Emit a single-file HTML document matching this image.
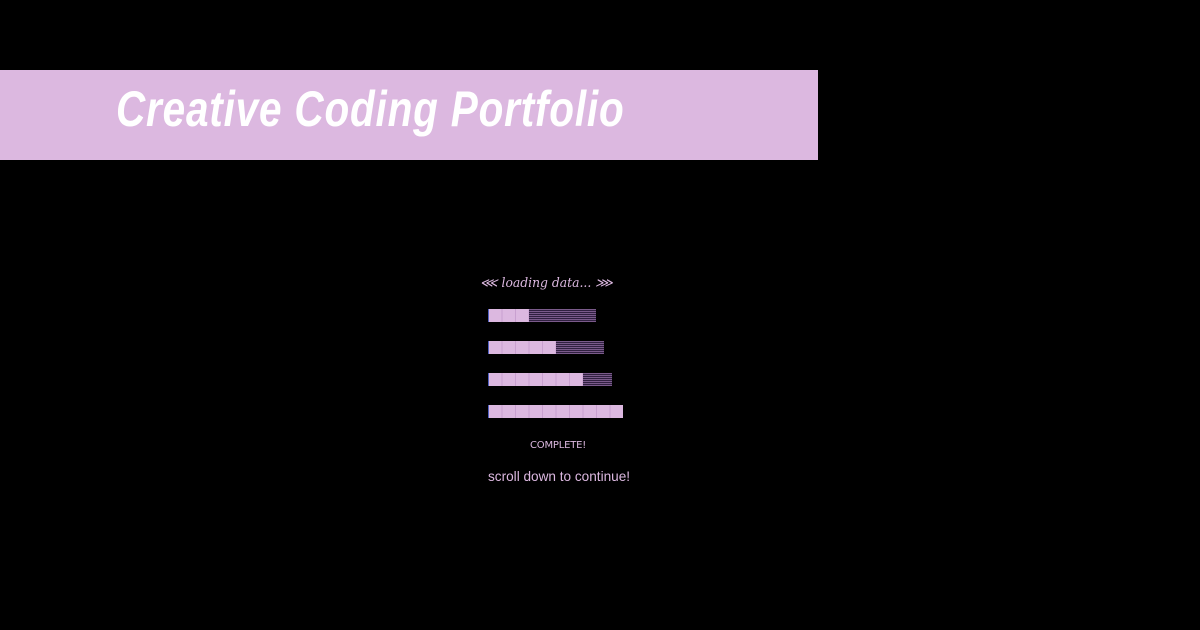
<!DOCTYPE html>
<html><head><style>
body{margin:0;width:1200px;height:630px;background:#000;overflow:hidden;position:relative;font-family:"Liberation Sans",sans-serif}
.banner{position:absolute;left:0;top:70px;width:818px;height:90px;background:#dcb8e0}
.title{position:absolute;left:116px;top:80px;color:#fff;font:italic bold 50px "Liberation Sans",sans-serif;letter-spacing:1px;white-space:nowrap;transform:scaleX(0.81);transform-origin:left}
.load{position:absolute;left:480px;top:276px;color:#dcb8e0;font:italic 13px "DejaVu Serif",serif;white-space:nowrap;transform:scaleX(0.95);transform-origin:left}
.bar{position:absolute;left:488px;height:13px}
.f{position:absolute;top:0;left:0;height:13px;background:#dcb8e0;background-image:repeating-linear-gradient(90deg,transparent 0 12.5px,#c9a0d0 12.5px 13.5px);border-left:1px solid #5060c0}
.d{position:absolute;top:0;height:13px;background:repeating-linear-gradient(0deg,#7a5a8a 0 1px,#302040 1px 2px)}
.c{position:absolute;left:530px;top:440px;color:#dcb8e0;font:10px "DejaVu Sans",sans-serif;letter-spacing:-0.2px}
.s{position:absolute;left:488px;top:469px;color:#dcb8e0;font:13.6px "Liberation Sans",sans-serif}
</style></head><body>
<div class="banner"></div>
<div class="title">Creative Coding Portfolio</div>
<div class="load">⋘ loading data... ⋙</div>
<div class="bar" style="top:309px"><div class="f" style="width:40px"></div><div class="d" style="left:41px;width:67px"></div></div>
<div class="bar" style="top:341px"><div class="f" style="width:67px"></div><div class="d" style="left:68px;width:48px"></div></div>
<div class="bar" style="top:373px"><div class="f" style="width:94px"></div><div class="d" style="left:95px;width:29px"></div></div>
<div class="bar" style="top:405px"><div class="f" style="width:134px"></div></div>
<div class="c">COMPLETE!</div>
<div class="s">scroll down to continue!</div>
</body></html>
